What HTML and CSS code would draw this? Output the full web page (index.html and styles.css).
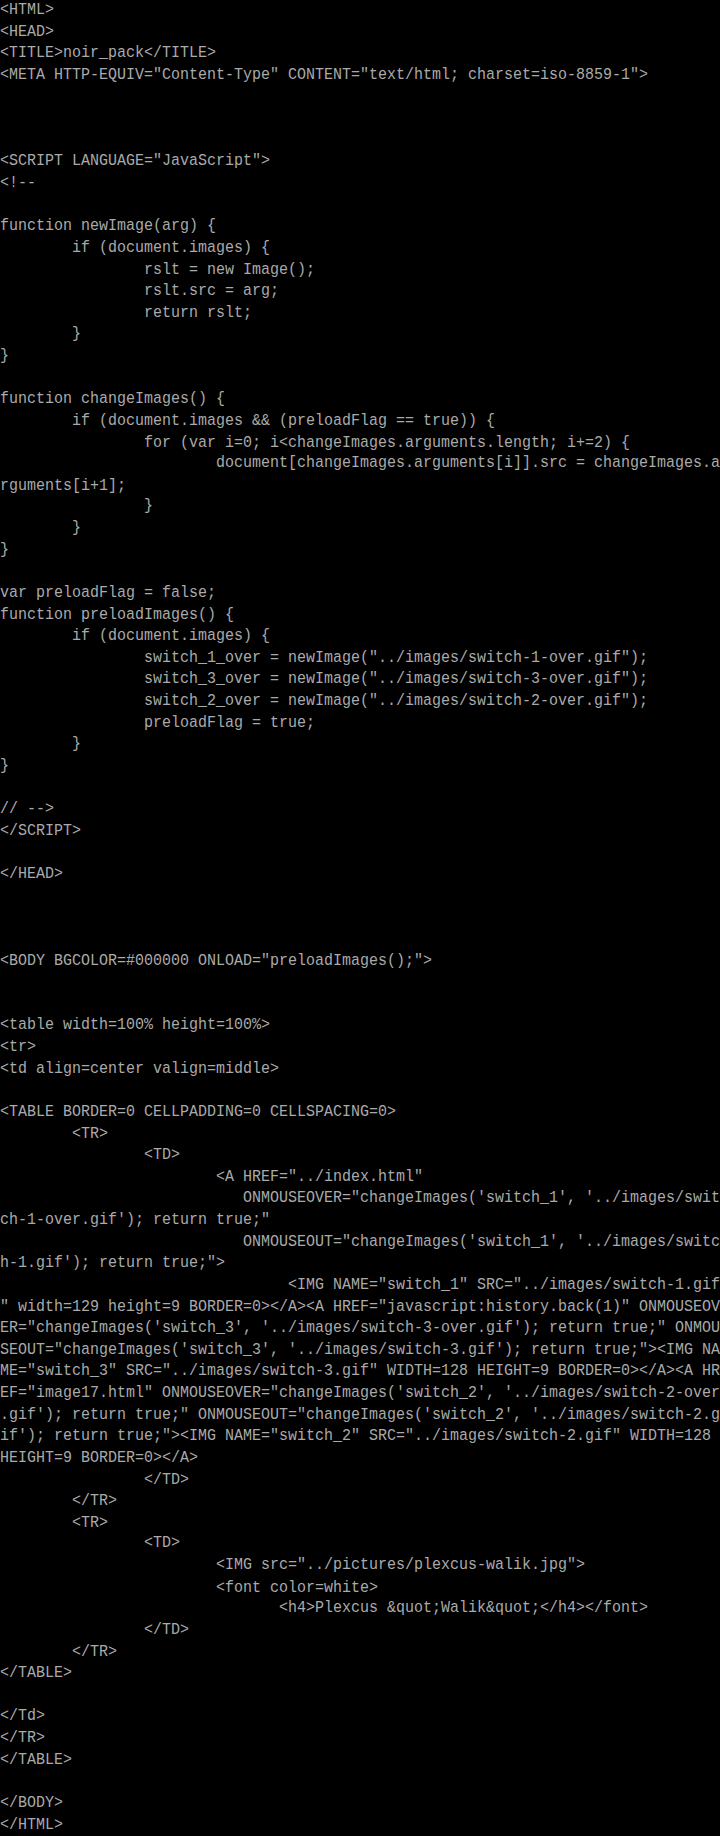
FILE: index.html
```html
<!DOCTYPE html>
<html>
<head>
<meta charset="utf-8">
<title>noir_pack</title>
<link rel="stylesheet" href="styles.css">
</head>
<body>
<pre class="screen">&lt;HTML&gt;
&lt;HEAD&gt;
&lt;TITLE&gt;noir_pack&lt;/TITLE&gt;
&lt;META HTTP-EQUIV="Content-Type" CONTENT="text/html; charset=iso-8859-1"&gt;



&lt;SCRIPT LANGUAGE="JavaScript"&gt;
&lt;!--

function newImage(arg) {
        if (document.images) {
                rslt = new Image();
                rslt.src = arg;
                return rslt;
        }
}

function changeImages() {
        if (document.images &amp;&amp; (preloadFlag == true)) {
                for (var i=0; i&lt;changeImages.arguments.length; i+=2) {
                        document[changeImages.arguments[i]].src = changeImages.a
rguments[i+1];
                }
        }
}

var preloadFlag = false;
function preloadImages() {
        if (document.images) {
                switch_1_over = newImage("../images/switch-1-over.gif");
                switch_3_over = newImage("../images/switch-3-over.gif");
                switch_2_over = newImage("../images/switch-2-over.gif");
                preloadFlag = true;
        }
}

// --&gt;
&lt;/SCRIPT&gt;

&lt;/HEAD&gt;



&lt;BODY BGCOLOR=#000000 ONLOAD="preloadImages();"&gt;


&lt;table width=100% height=100%&gt;
&lt;tr&gt;
&lt;td align=center valign=middle&gt;

&lt;TABLE BORDER=0 CELLPADDING=0 CELLSPACING=0&gt;
        &lt;TR&gt;
                &lt;TD&gt;
                        &lt;A HREF="../index.html"
                           ONMOUSEOVER="changeImages('switch_1', '../images/swit
ch-1-over.gif'); return true;"
                           ONMOUSEOUT="changeImages('switch_1', '../images/switc
h-1.gif'); return true;"&gt;
                                &lt;IMG NAME="switch_1" SRC="../images/switch-1.gif
" width=129 height=9 BORDER=0&gt;&lt;/A&gt;&lt;A HREF="javascript:history.back(1)" ONMOUSEOV
ER="changeImages('switch_3', '../images/switch-3-over.gif'); return true;" ONMOU
SEOUT="changeImages('switch_3', '../images/switch-3.gif'); return true;"&gt;&lt;IMG NA
ME="switch_3" SRC="../images/switch-3.gif" WIDTH=128 HEIGHT=9 BORDER=0&gt;&lt;/A&gt;&lt;A HR
EF="image17.html" ONMOUSEOVER="changeImages('switch_2', '../images/switch-2-over
.gif'); return true;" ONMOUSEOUT="changeImages('switch_2', '../images/switch-2.g
if'); return true;"&gt;&lt;IMG NAME="switch_2" SRC="../images/switch-2.gif" WIDTH=128 
HEIGHT=9 BORDER=0&gt;&lt;/A&gt;
                &lt;/TD&gt;
        &lt;/TR&gt;
        &lt;TR&gt;
                &lt;TD&gt;
                        &lt;IMG src="../pictures/plexcus-walik.jpg"&gt;
                        &lt;font color=white&gt;
                               &lt;h4&gt;Plexcus &amp;quot;Walik&amp;quot;&lt;/h4&gt;&lt;/font&gt;
                &lt;/TD&gt;
        &lt;/TR&gt;
&lt;/TABLE&gt;

&lt;/Td&gt;
&lt;/TR&gt;
&lt;/TABLE&gt;

&lt;/BODY&gt;
&lt;/HTML&gt;</pre>
</body>
</html>
```

FILE: styles.css
```css
html, body {
  margin: 0;
  padding: 0;
  background: #000000;
}

body {
  width: 720px;
  height: 1836px;
  overflow: hidden;
}

.screen {
  margin: 0;
  padding: 0;
  font-family: "Liberation Mono", "DejaVu Sans Mono", monospace;
  font-size: 15px;
  line-height: 18.62px;
  color: #aaaaaa;
  white-space: pre;
  transform: scaleY(1.16);
  transform-origin: 0 0;
}
```
